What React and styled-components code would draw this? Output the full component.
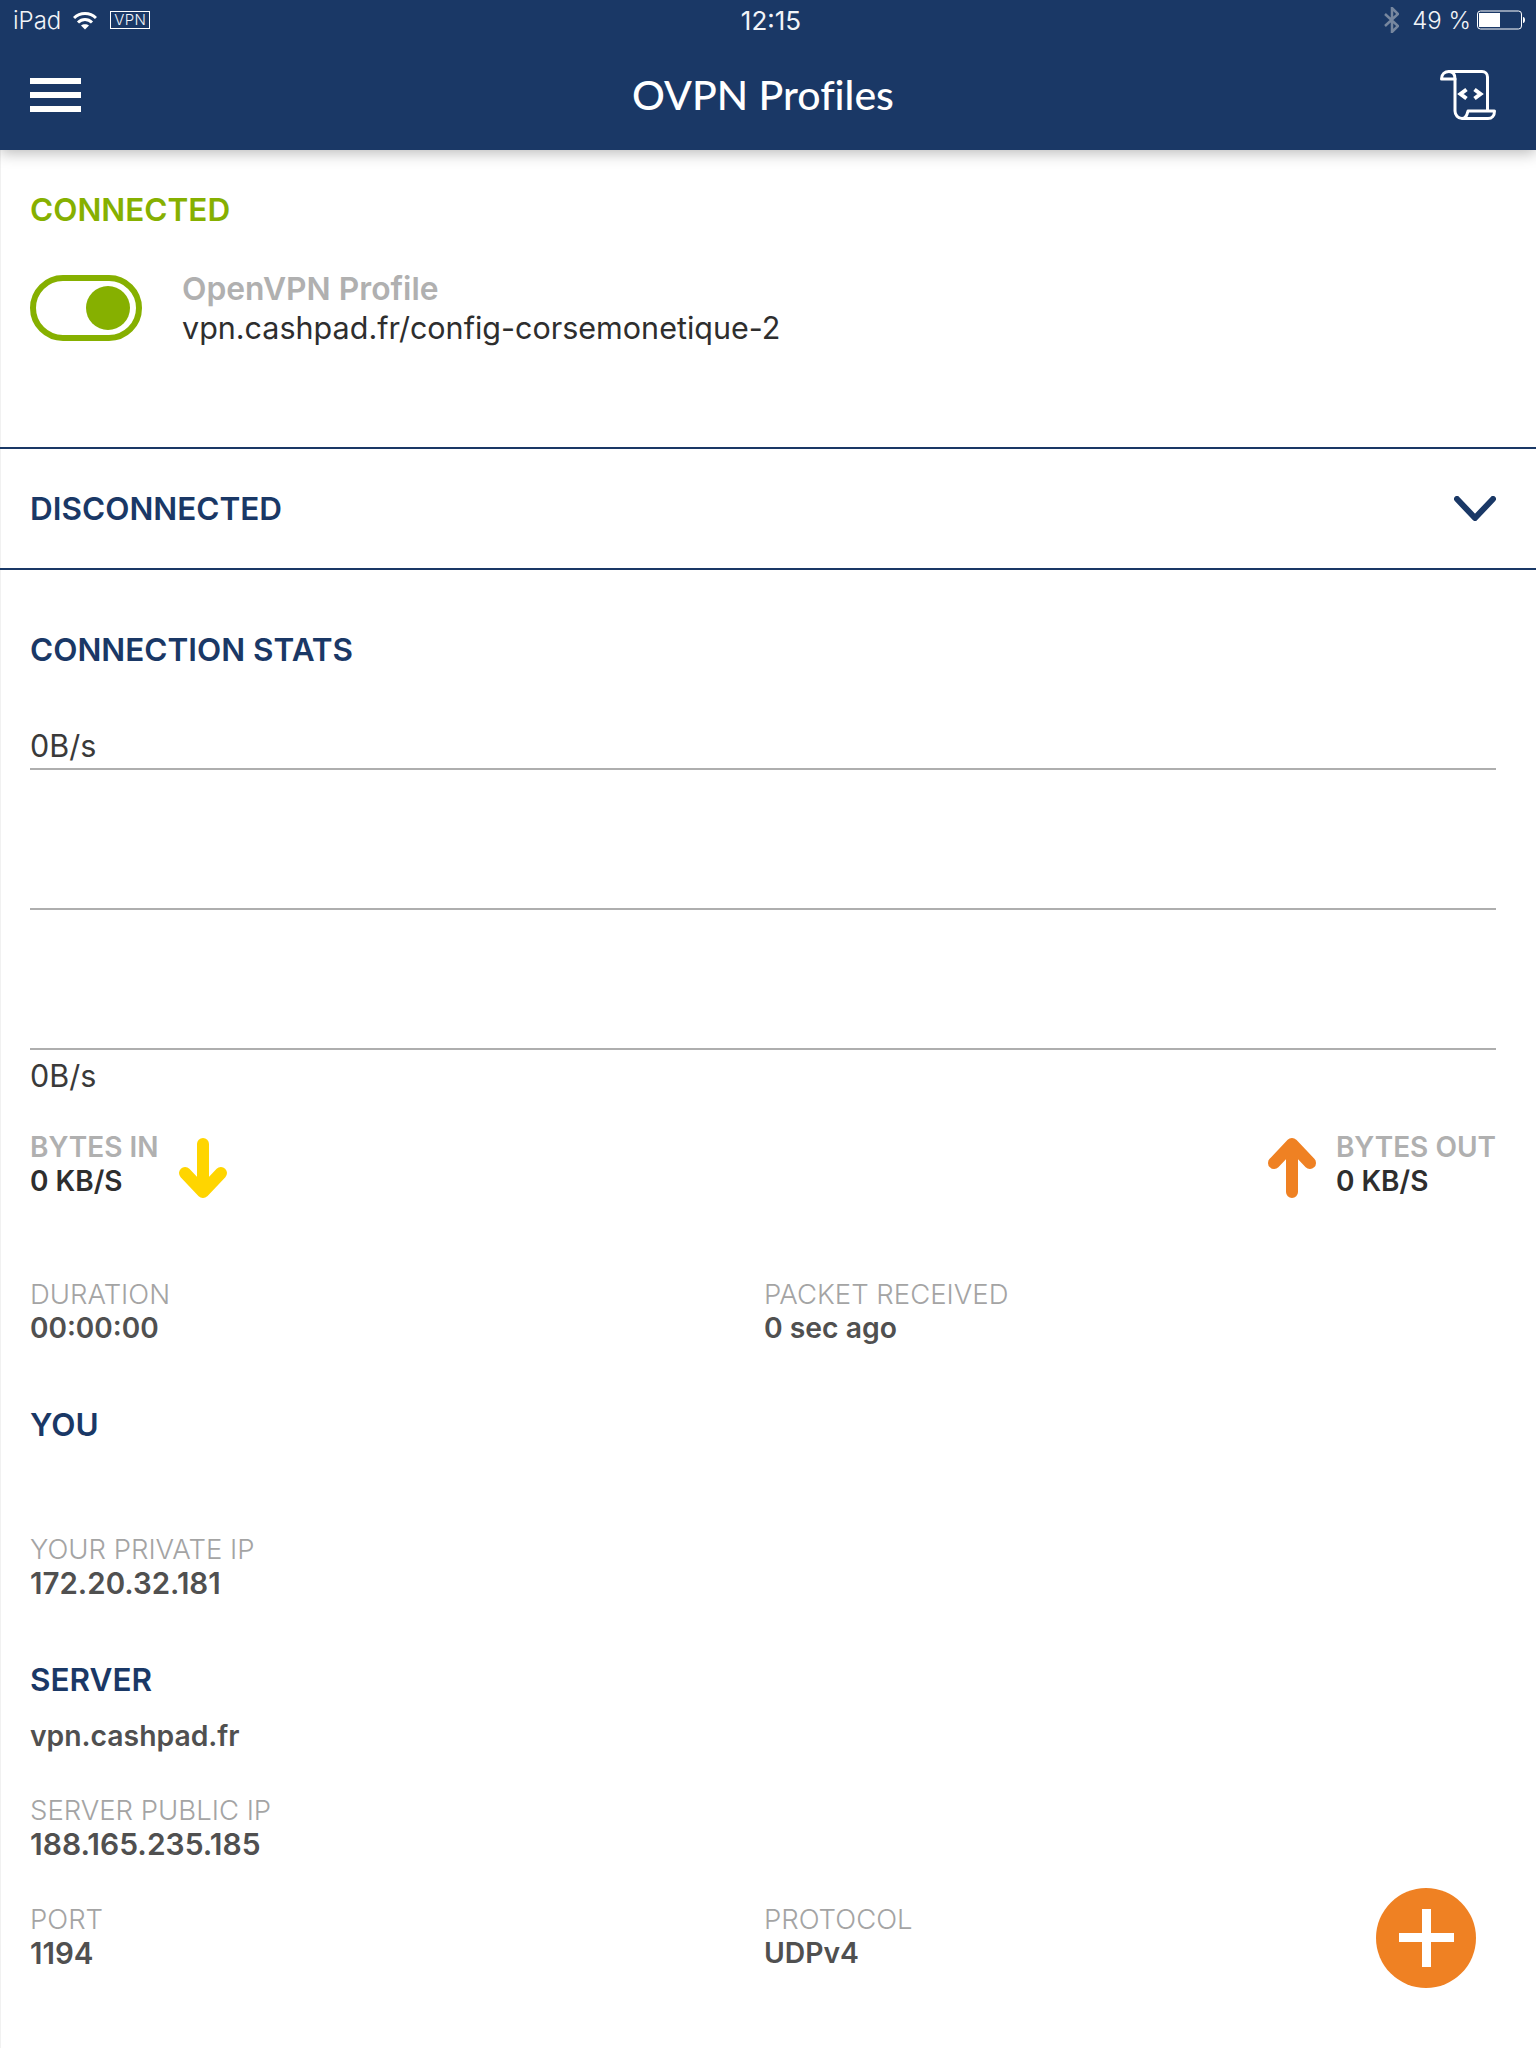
import React from "react";
import styled, { createGlobalStyle } from "styled-components";

const Global = createGlobalStyle`
  html, body { margin: 0; padding: 0; background: #fff; }
  body { font-family: Inter, "Liberation Sans", sans-serif; }
  * { box-sizing: border-box; }
`;

const Page = styled.div`
  position: relative;
  width: 1536px;
  height: 2048px;
  overflow: hidden;
  background: #fff;
  box-shadow: inset 1px 0 0 #f1f1f1;
`;

const Header = styled.header`
  height: 150px;
  background: #1a3866;
  color: #fff;
  box-shadow: 0 3px 14px rgba(0, 0, 0, 0.28);
  position: relative;
  z-index: 1;
`;

const StatusBar = styled.div`
  height: 40px;
  display: grid;
  grid-template-columns: 1fr auto 1fr;
  align-items: center;
  padding: 0 11px 0 13px;
  font-size: 24px;
  font-weight: 300;
  color: #f2f4f8;
`;

const StatusSide = styled.div`
  display: flex;
  align-items: center;
  justify-content: ${(p) => (p.$right ? "flex-end" : "flex-start")};
`;

const Clock = styled.div`
  font-weight: 400;
  font-size: 26px;
  position: relative;
  left: 2px;
`;

const VpnBadge = styled.span`
  width: 40px;
  height: 18px;
  border: 1px solid #fff;
  margin-left: 13px;
  font-size: 15px;
  line-height: 16px;
  text-align: center;
  letter-spacing: 0.4px;
`;

const NavBar = styled.div`
  height: 110px;
  padding: 0 40px 0 30px;
  display: grid;
  grid-template-columns: 1fr auto 1fr;
  align-items: center;
`;

const Burger = styled.div`
  width: 51px;
  height: 34px;
  display: flex;
  flex-direction: column;
  justify-content: space-between;
  & > i { display: block; height: 6px; background: #fff; }
`;

const Title = styled.h1`
  margin: 0;
  font-family: Lato, "Open Sans", sans-serif;
  font-weight: 500;
  font-size: 41px;
  line-height: 48px;
  font-variant-ligatures: none;
`;

const ScrollIcon = styled.svg`
  width: 56px;
  height: 50px;
  display: block;
  justify-self: end;
`;

const ConnectedBlock = styled.section`
  height: 297px;
  padding: 43px 30px 0 30px;
`;

const SectionTitle = styled.h2`
  margin: ${(p) => p.$mt || 0}px 0 0;
  font-size: 31.5px;
  line-height: 34px;
  font-weight: 600;
  color: ${(p) => p.$color || "#1a3866"};
`;

const ProfileRow = styled.div`
  display: flex;
  margin-top: 48px;
  align-items: flex-start;
`;

const Toggle = styled.div`
  width: 112px;
  height: 66px;
  border: 6px solid #86b000;
  border-radius: 33px;
  padding: 5px 6px;
  display: flex;
  justify-content: flex-end;
  flex: none;
  margin-right: 41px;
  & > i { display: block; width: 44px; height: 44px; border-radius: 50%; background: #86b000; }
`;

const ProfileText = styled.div`
  margin-top: -5px;
  margin-left: -1px;
`;

const ProfileName = styled.div`
  font-size: 31.8px;
  line-height: 38px;
  font-weight: 600;
  color: #b0b0b0;
`;

const ProfileUrl = styled.div`
  font-size: 30.5px;
  line-height: 39px;
  font-weight: 400;
  color: #2e2e2e;
`;

const Accordion = styled.section`
  height: 123px;
  border-top: 2px solid #1a3866;
  border-bottom: 2px solid #1a3866;
  padding: 0 40px 0 30px;
  display: flex;
  align-items: center;
  justify-content: space-between;
`;

const Body = styled.main`
  padding: 0 40px 0 30px;
`;

const Axis = styled.div`
  font-size: 30.5px;
  line-height: 36px;
  color: #3a3a3a;
  font-weight: 400;
`;

const BottomAxis = styled(Axis)`
  margin-top: 8px;
`;

const ChartRow = styled.div`
  height: ${(p) => p.$h}px;
  border-bottom: 2px solid #aeaeae;
  display: flex;
  align-items: flex-end;
  padding-bottom: 4px;
`;

const Rates = styled.div`
  display: flex;
  justify-content: space-between;
  margin-top: 36px;
`;

const Rate = styled.div`
  display: flex;
  align-items: center;
  gap: ${(p) => p.$gap}px;
`;

const RateLabel = styled.div`
  font-size: 28px;
  line-height: 34px;
  font-weight: 600;
  color: #b0b0b0;
`;

const RateValue = styled.div`
  font-size: 28px;
  line-height: 34px;
  font-weight: 600;
  color: #2e2e2e;
`;

const Arrow = styled.svg`
  width: 48px;
  height: 60px;
  display: block;
  margin-top: 7px;
`;

const Cols = styled.div`
  display: grid;
  grid-template-columns: 734px 1fr;
  margin-top: ${(p) => p.$mt}px;
`;

const Field = styled.div`
  margin-top: ${(p) => p.$mt || 0}px;
`;

const FieldLabel = styled.div`
  font-size: 27.5px;
  line-height: 34px;
  font-weight: 300;
  color: #a4a4a4;
`;

const FieldValue = styled.div`
  font-size: ${(p) => p.$size || 28.3}px;
  line-height: 34px;
  font-weight: 600;
  color: #505050;
`;

const Fab = styled.div`
  position: absolute;
  left: 1376px;
  top: 1888px;
  width: 100px;
  height: 100px;
  border-radius: 50%;
  background: #ef8123;
  display: flex;
  align-items: center;
  justify-content: center;
`;

export default function App() {
  return (
    <Page>
      <Global />
      <Header>
        <StatusBar>
          <StatusSide>
            <span>iPad</span>
            <svg width="24" height="19" viewBox="0 0 24 19" style={{ marginLeft: 12 }} fill="none" stroke="#fff" strokeWidth="3">
              <path d="M1 7C7 1 17 1 23 7" />
              <path d="M5 11.500c4-4 10-4 14 0" />
              <path d="M12 18.500l-4-4c2-1.600 6-1.600 8 0z" fill="#fff" stroke="none" />
            </svg>
            <VpnBadge>VPN</VpnBadge>
          </StatusSide>
          <Clock>12:15</Clock>
          <StatusSide $right>
            <svg width="15" height="26" viewBox="0 0 15 26" fill="none" stroke="#77879f" strokeWidth="2.500" style={{ marginRight: 13 }}>
              <path d="M1 7l13 12-6 6V1l6 6L1 19" />
            </svg>
            <span>49 %</span>
            <svg width="48" height="20" viewBox="0 0 48 20" style={{ marginLeft: 6 }}>
              <rect x="0.500" y="1" width="44" height="18" rx="3" fill="none" stroke="#fff" />
              <rect x="2" y="3" width="21" height="14" fill="#fff" />
              <path d="M46 7c1.500 0 2 1.500 2 3s-.5 3-2 3z" fill="#fff" />
            </svg>
          </StatusSide>
        </StatusBar>
        <NavBar>
          <Burger><i /><i /><i /></Burger>
          <Title>OVPN Profiles</Title>
          <ScrollIcon viewBox="0 0 56 50" fill="none" stroke="#fff" strokeWidth="3" strokeLinejoin="round" strokeLinecap="round">
            <path d="M9 1.500H42a5.500 5.500 0 0 1 5.500 5.500V40" />
            <path d="M1.500 9C1.500 4 5 1.500 9 1.500 13 1.500 15 4 15 9z" />
            <path d="M15 9V41c0 4 3 7.500 7 7.500h26c4 0 6.500-3 6.500-7.500H28c-1 4-2 7.500-6 7.500" />
            <path d="M26.500 19.500 20.500 24l6 4.500M34.500 19.500l6 4.500-6 4.500" strokeWidth="4" strokeLinecap="butt" strokeLinejoin="miter" />
          </ScrollIcon>
        </NavBar>
      </Header>

      <ConnectedBlock>
        <SectionTitle $color="#86b000">CONNECTED</SectionTitle>
        <ProfileRow>
          <Toggle><i /></Toggle>
          <ProfileText>
            <ProfileName>OpenVPN Profile</ProfileName>
            <ProfileUrl>vpn.cashpad.fr/config-corsemonetique-2</ProfileUrl>
          </ProfileText>
        </ProfileRow>
      </ConnectedBlock>

      <Accordion>
        <SectionTitle>DISCONNECTED</SectionTitle>
        <svg width="42" height="25" viewBox="0 0 42 25" fill="none" stroke="#1a3866" strokeWidth="6" strokeLinecap="round" strokeLinejoin="round">
          <path d="M3 3l18 19L39 3" />
        </svg>
      </Accordion>

      <Body>
        <SectionTitle $mt={63}>CONNECTION STATS</SectionTitle>
        <ChartRow $h={103}><Axis>0B/s</Axis></ChartRow>
        <ChartRow $h={140} />
        <ChartRow $h={140} />
        <BottomAxis>0B/s</BottomAxis>

        <Rates>
          <Rate $gap={20}>
            <div>
              <RateLabel>BYTES IN</RateLabel>
              <RateValue>0 KB/S</RateValue>
            </div>
            <Arrow viewBox="0 0 48 60" fill="none" stroke="#ffd500" strokeWidth="12" strokeLinecap="round" strokeLinejoin="round">
              <path d="M24 6v48M6 35l18 19 18-19" />
            </Arrow>
          </Rate>
          <Rate $gap={20}>
            <Arrow viewBox="0 0 48 60" fill="none" stroke="#ef8123" strokeWidth="12" strokeLinecap="round" strokeLinejoin="round">
              <path d="M24 54V6M6 25L24 6l18 19" />
            </Arrow>
            <div>
              <RateLabel>BYTES OUT</RateLabel>
              <RateValue>0 KB/S</RateValue>
            </div>
          </Rate>
        </Rates>

        <Cols $mt={79}>
          <Field>
            <FieldLabel>DURATION</FieldLabel>
            <FieldValue $size={28}>00:00:00</FieldValue>
          </Field>
          <Field>
            <FieldLabel>PACKET RECEIVED</FieldLabel>
            <FieldValue>0 sec ago</FieldValue>
          </Field>
        </Cols>

        <SectionTitle $mt={63}>YOU</SectionTitle>
        <Field $mt={90}>
          <FieldLabel>YOUR PRIVATE IP</FieldLabel>
          <FieldValue $size={29.5}>172.20.32.181</FieldValue>
        </Field>

        <SectionTitle $mt={63}>SERVER</SectionTitle>
        <Field $mt={22}>
          <FieldValue>vpn.cashpad.fr</FieldValue>
        </Field>
        <Field $mt={40}>
          <FieldLabel>SERVER PUBLIC IP</FieldLabel>
          <FieldValue $size={30}>188.165.235.185</FieldValue>
        </Field>

        <Cols $mt={41}>
          <Field>
            <FieldLabel>PORT</FieldLabel>
            <FieldValue $size={29.5}>1194</FieldValue>
          </Field>
          <Field>
            <FieldLabel>PROTOCOL</FieldLabel>
            <FieldValue>UDPv4</FieldValue>
          </Field>
        </Cols>
      </Body>

      <Fab>
        <svg width="55" height="58" viewBox="0 0 55 58" fill="#fff">
          <rect x="23" y="0" width="9" height="58" />
          <rect x="0" y="24" width="55" height="9" />
        </svg>
      </Fab>
    </Page>
  );
}
